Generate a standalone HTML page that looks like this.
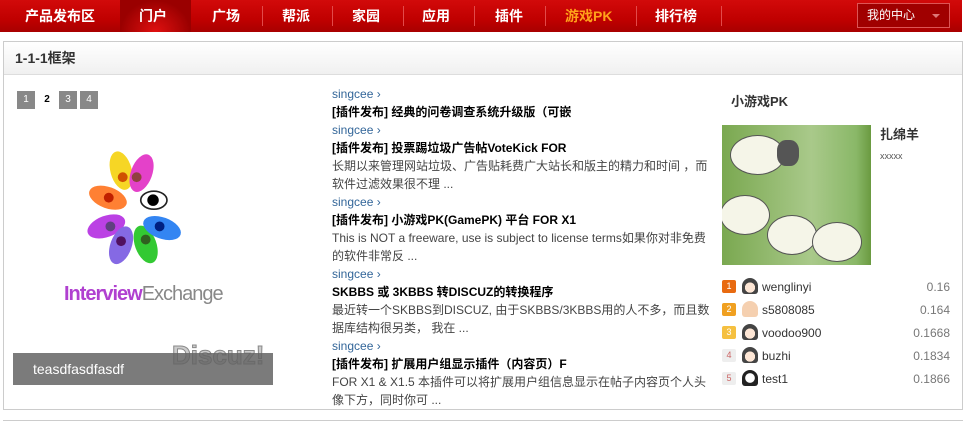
<!DOCTYPE html>
<html><head><meta charset="utf-8"><style>
*{margin:0;padding:0;box-sizing:border-box}
body{width:972px;height:428px;background:#fff;font-family:"Liberation Sans","Noto Sans CJK SC",sans-serif;font-size:12px;color:#333;position:relative;overflow:hidden}
.nav{position:absolute;left:0;top:0;width:962px;height:32px;background:linear-gradient(#d20a0a,#c00000 60%,#a80000);}
.nav a{position:absolute;top:0;height:32px;line-height:32px;color:#fff;font-weight:bold;font-size:14px;text-decoration:none}
.sep{position:absolute;top:6px;width:1px;height:20px;background:#e24a4a}
.cur{position:absolute;left:120px;top:0;width:71px;height:32px;background:radial-gradient(ellipse at 50% 100%,#e01010,#9a0000 70%)}
.me{position:absolute;left:857px;top:3px;width:93px;height:25px;border:1px solid #d55;background:#a00000;color:#fff;font-size:12px;line-height:23px;padding-left:9px}
.me:after{content:"";position:absolute;right:9px;top:10px;border:4px solid transparent;border-top-color:#d77}
.box{position:absolute;left:3px;top:41px;width:960px;height:369px;border:1px solid #ccc}
.hd{height:33px;background:linear-gradient(#fff,#f0f0f0);border-bottom:1px solid #ddd;font-weight:bold;font-size:14px;line-height:33px;padding-left:11px;color:#333}
.bot{position:absolute;left:3px;top:420px;width:960px;height:10px;border-top:1px solid #ccc}
.pg{position:absolute;top:91px;width:18px;height:18px;line-height:18px;text-align:center;font-size:10px;color:#fff;background:#888}
.mid{position:absolute;left:332px;top:85px;width:385px;line-height:18px;font-size:12px}
.mid .u{color:#336699}
.mid b{display:block;color:#000;font-size:12px}
.mid .d{color:#444}
.rk{position:absolute;left:722px;width:228px;height:18px;line-height:18px}
.rk i{position:absolute;left:0;top:2px;width:14px;height:13px;font-style:normal;font-size:9px;color:#fff;text-align:center;line-height:13px;border-radius:2px}
.rk s{position:absolute;left:20px;top:0;width:16px;height:16px;border-radius:8px 8px 3px 3px;background:radial-gradient(circle at 50% 60%,#fde6d5 40%,#444 42%)}
.rk span{position:absolute;left:40px}
.rk em{position:absolute;right:0;font-style:normal;color:#777}
</style></head><body>
<div class="nav">
<div class="cur"></div>
<a style="left:25px">产品发布区</a>
<a style="left:139px">门户</a>
<a style="left:212px">广场</a>
<a style="left:282px">帮派</a>
<a style="left:352px">家园</a>
<a style="left:422px">应用</a>
<a style="left:495px">插件</a>
<a style="left:565px;color:#ffa21a">游戏PK</a>
<a style="left:655px">排行榜</a>
<div class="sep" style="left:262px"></div><div class="sep" style="left:332px"></div><div class="sep" style="left:403px"></div><div class="sep" style="left:474px"></div><div class="sep" style="left:545px"></div><div class="sep" style="left:636px"></div><div class="sep" style="left:721px"></div>
<div class="me">我的中心</div>
</div>
<div class="box"><div class="hd">1-1-1框架</div></div>
<div class="bot"></div>
<div class="pg" style="left:17px">1</div>
<div class="pg" style="left:38px;background:#fff;color:#000;font-weight:bold">2</div>
<div class="pg" style="left:59px">3</div>
<div class="pg" style="left:80px">4</div>
<svg style="position:absolute;left:50px;top:140px" width="170" height="150">
<g transform="translate(85 70) scale(0.82) translate(-85 -70)">
<g opacity="0.85">
<ellipse cx="68" cy="22" rx="13" ry="24" fill="#f5d000" transform="rotate(-15 68 22)"/>
<ellipse cx="93" cy="25" rx="13" ry="24" fill="#e020c0" transform="rotate(20 93 25)"/>
<ellipse cx="52" cy="55" rx="13" ry="24" fill="#ff6a10" transform="rotate(-70 52 55)"/>
<ellipse cx="50" cy="90" rx="13" ry="24" fill="#b020e0" transform="rotate(-110 50 90)"/>
<ellipse cx="68" cy="113" rx="13" ry="24" fill="#7050e0" transform="rotate(-160 68 113)"/>
<ellipse cx="98" cy="112" rx="13" ry="24" fill="#10c010" transform="rotate(160 98 112)"/>
<ellipse cx="118" cy="92" rx="13" ry="24" fill="#1070f0" transform="rotate(110 118 92)"/>
</g>
<ellipse cx="108" cy="58" rx="16" ry="11" fill="#fff" stroke="#222" stroke-width="2"/>
<circle cx="107" cy="58" r="7" fill="#000"/>
<circle cx="70" cy="30" r="6" fill="#d05000"/><circle cx="53" cy="55" r="6" fill="#c02000"/><circle cx="55" cy="90" r="6" fill="#604080"/><circle cx="68" cy="108" r="6" fill="#501060"/><circle cx="98" cy="106" r="6" fill="#306020"/><circle cx="115" cy="90" r="6" fill="#002080"/><circle cx="87" cy="30" r="6" fill="#904040"/>
</g>
</svg>
<div style="position:absolute;left:64px;top:283px;font-size:20px;letter-spacing:-1px;color:#b040d0;font-weight:bold">Interview<span style="color:#888;font-weight:normal">Exchange</span></div>
<div style="position:absolute;left:172px;top:340px;font-size:26px;font-weight:bold;color:#ccc;-webkit-text-stroke:1px #888">Discuz!</div>
<div style="position:absolute;left:13px;top:353px;width:260px;height:32px;background:rgba(100,100,100,0.85);color:#fff;font-size:14px;line-height:32px;padding-left:20px">teasdfasdfasdf</div>
<div class="mid">
<div class="u">singcee ›</div><b>[插件发布] 经典的问卷调查系统升级版（可嵌</b>
<div class="u">singcee ›</div><b>[插件发布] 投票踢垃圾广告帖VoteKick FOR</b>
<div class="d">长期以来管理网站垃圾、广告贴耗费广大站长和版主的精力和时间 ，而软件过滤效果很不理 ...</div>
<div class="u">singcee ›</div><b>[插件发布] 小游戏PK(GamePK) 平台 FOR X1</b>
<div class="d">This is NOT a freeware, use is subject to license terms如果你对非免费的软件非常反 ...</div>
<div class="u">singcee ›</div><b>SKBBS 或 3KBBS 转DISCUZ的转换程序</b>
<div class="d">最近转一个SKBBS到DISCUZ, 由于SKBBS/3KBBS用的人不多，而且数据库结构很另类， 我在 ...</div>
<div class="u">singcee ›</div><b>[插件发布] 扩展用户组显示插件（内容页）F</b>
<div class="d">FOR X1 &amp; X1.5 本插件可以将扩展用户组信息显示在帖子内容页个人头像下方，同时你可 ...</div>
</div>
<div style="position:absolute;left:731px;top:91px;font-weight:bold;font-size:13px;color:#333">小游戏PK</div>
<div style="position:absolute;left:722px;top:125px;width:149px;height:140px;background:linear-gradient(90deg,#7aa850,#a9c98a 60%,#8ab868 90%,#6a9a40);overflow:hidden">
<div style="position:absolute;left:8px;top:10px;width:55px;height:40px;border-radius:50%;background:#f5f5e8;border:1px solid #555"></div>
<div style="position:absolute;left:-2px;top:70px;width:50px;height:40px;border-radius:50%;background:#f5f5e8;border:1px solid #555"></div>
<div style="position:absolute;left:45px;top:90px;width:50px;height:40px;border-radius:50%;background:#f5f5e8;border:1px solid #555"></div>
<div style="position:absolute;left:90px;top:97px;width:50px;height:40px;border-radius:50%;background:#f5f5e8;border:1px solid #555"></div>
<div style="position:absolute;left:55px;top:15px;width:22px;height:26px;border-radius:40%;background:#555"></div>
</div>
<div style="position:absolute;left:880px;top:124px;font-weight:bold;font-size:13px">扎绵羊</div>
<div style="position:absolute;left:880px;top:151px;font-size:9px;color:#555">xxxxx</div>
<div class="rk" style="top:278px"><i style="background:#e86a10">1</i><s></s><span>wenglinyi</span><em>0.16</em></div>
<div class="rk" style="top:301px"><i style="background:#f0a020">2</i><s style="background:#f5d0b0"></s><span>s5808085</span><em>0.164</em></div>
<div class="rk" style="top:324px"><i style="background:#f5c040">3</i><s></s><span>voodoo900</span><em>0.1668</em></div>
<div class="rk" style="top:347px"><i style="background:#eee;color:#c66">4</i><s></s><span>buzhi</span><em>0.1834</em></div>
<div class="rk" style="top:370px"><i style="background:#eee;color:#c66">5</i><s style="background:radial-gradient(circle,#fff 40%,#222 45%)"></s><span>test1</span><em>0.1866</em></div>
</body></html>
